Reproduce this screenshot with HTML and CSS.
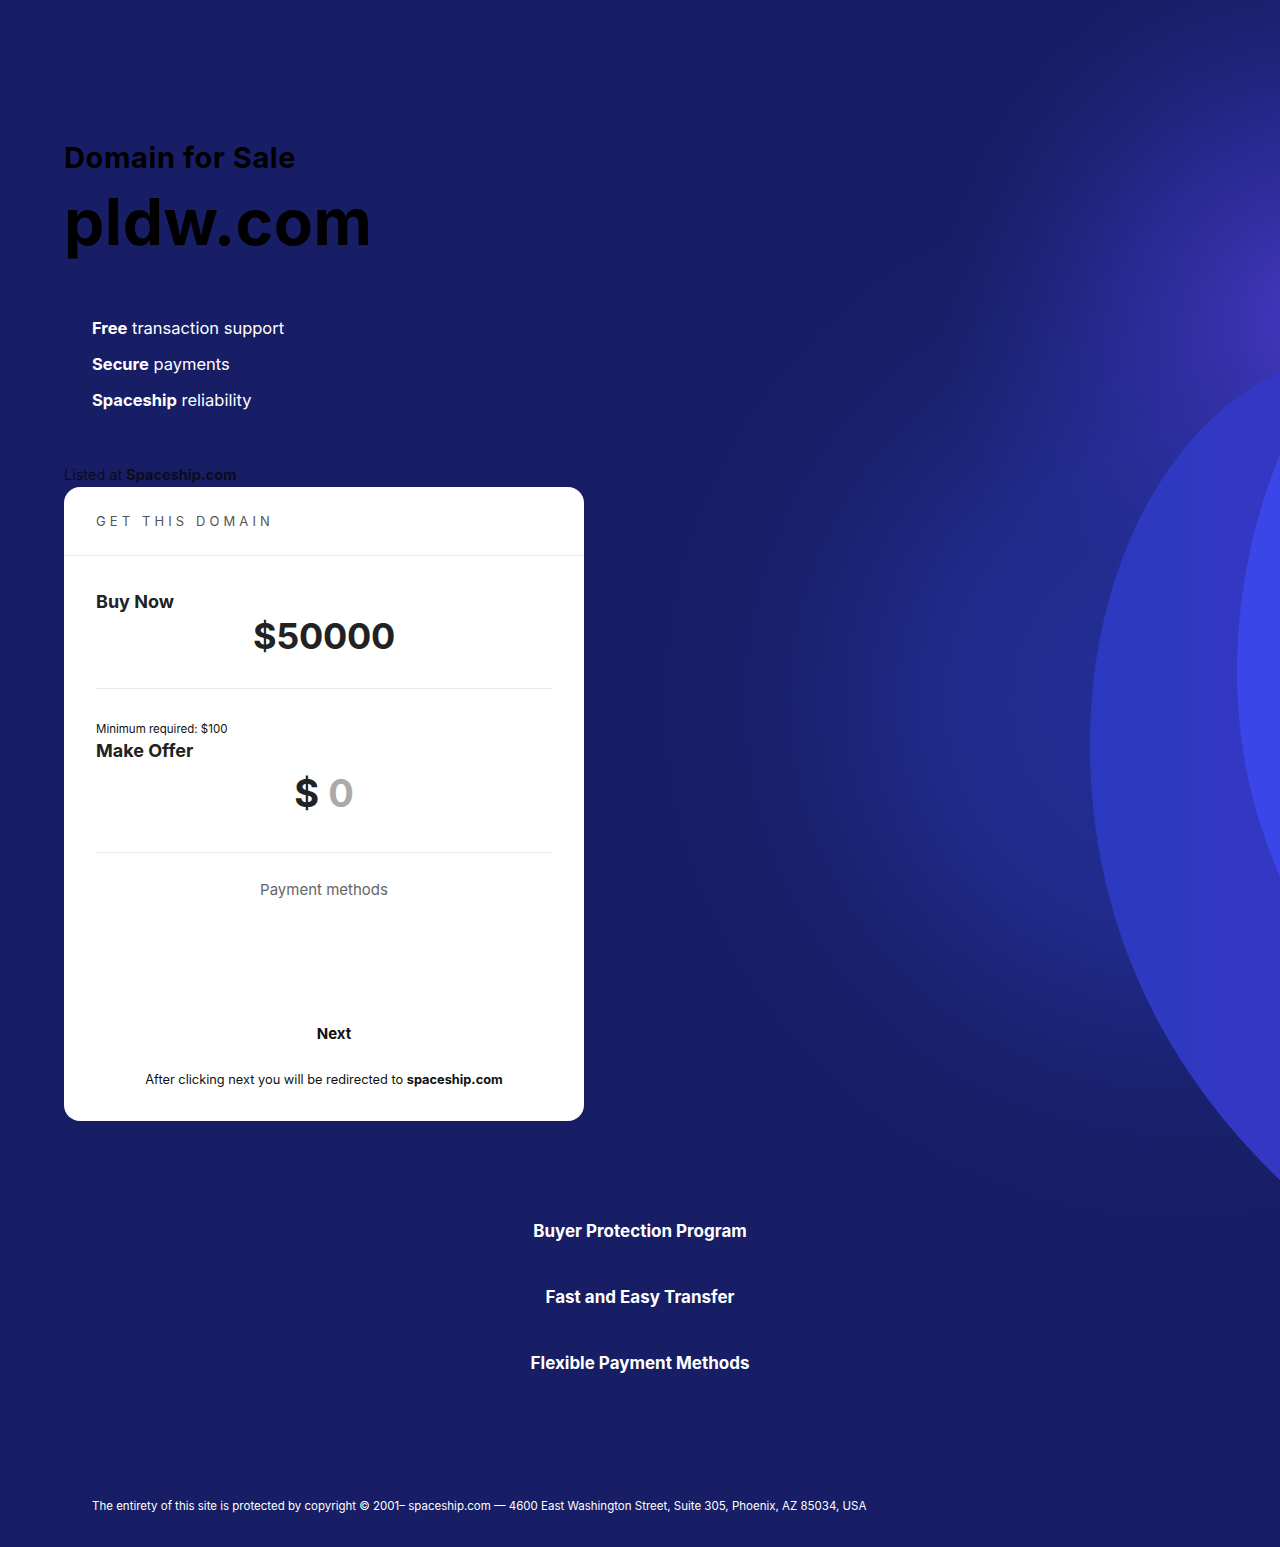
FILE: index.html
```html
<!DOCTYPE html>
<html lang="en">
<head>
<meta charset="utf-8">
<title>pldw.com - Domain for Sale</title>
<link rel="stylesheet" href="styles.css">
</head>
<body>
<div class="page">
  <svg class="bg" width="1280" height="1547" viewBox="0 0 1280 1547" aria-hidden="true">
    <defs>
      <radialGradient id="glow" cx="1180" cy="700" r="560" gradientUnits="userSpaceOnUse">
        <stop offset="0" stop-color="#25309a"/>
        <stop offset="0.45" stop-color="#1f2a88"/>
        <stop offset="1" stop-color="#171e65" stop-opacity="0"/>
      </radialGradient>
      <radialGradient id="purple" cx="1320" cy="320" r="380" gradientUnits="userSpaceOnUse">
        <stop offset="0" stop-color="#4838c4"/>
        <stop offset="0.5" stop-color="#3331ac" stop-opacity="0.6"/>
        <stop offset="1" stop-color="#232b90" stop-opacity="0"/>
      </radialGradient>
      <linearGradient id="mid" x1="0" y1="0" x2="1" y2="0">
        <stop offset="0" stop-color="#2b39c0"/>
        <stop offset="1" stop-color="#3537c4"/>
      </linearGradient>
    </defs>
    <rect x="0" y="0" width="1280" height="1547" fill="url(#glow)"/>
    <rect x="0" y="0" width="1280" height="1547" fill="url(#purple)"/>
    <path d="M1280,372 C1175,420 1090,560 1090,745 C1090,930 1170,1075 1280,1180 Z" fill="url(#mid)"/>
    <path d="M1280,455 C1252,520 1237,600 1237,670 C1237,760 1258,825 1280,877 Z" fill="#3a46e8"/>
  </svg>

  <main class="content">
    <section class="intro">
      <h2 class="subtitle">Domain for Sale</h2>
      <h1 class="domain">pldw.com</h1>
      <ul class="perks">
        <li><b>Free</b> transaction support</li>
        <li><b>Secure</b> payments</li>
        <li><b>Spaceship</b> reliability</li>
      </ul>
      <p class="listed">Listed at <b>Spaceship.com</b></p>
    </section>

    <div class="card">
      <div class="card-head">GET THIS DOMAIN</div>
      <div class="card-body">
        <div class="option buy">
          <div class="opt-title">Buy Now</div>
          <div class="price">$50000</div>
        </div>
        <div class="option offer">
          <div class="min">Minimum required: $100</div>
          <div class="opt-title">Make Offer</div>
          <div class="offer-input"><span class="cur">$</span><span class="ph">0</span></div>
        </div>
        <div class="payment">Payment methods</div>
        <div class="next">Next</div>
        <p class="redirect">After clicking next you will be redirected to <b>spaceship.com</b></p>
      </div>
    </div>

    <ul class="features">
      <li>Buyer Protection Program</li>
      <li>Fast and Easy Transfer</li>
      <li>Flexible Payment Methods</li>
    </ul>

    <footer class="footer">The entirety of this site is protected by copyright © 2001– spaceship.com — 4600 East Washington Street, Suite 305, Phoenix, AZ 85034, USA</footer>
  </main>
</div>
</body>
</html>
```

FILE: styles.css
```css
* { box-sizing: border-box; }
html, body { margin: 0; padding: 0; }
body {
  background: #171e65;
  font-family: Inter, "Noto Sans", Arial, sans-serif;
  color: #fff;
}
.page {
  position: relative;
  width: 1280px;
  min-height: 1547px;
  overflow: hidden;
}
.bg {
  position: absolute;
  left: 0;
  top: 0;
  z-index: 0;
}
.content {
  position: relative;
  z-index: 1;
  padding: 138px 64px 0 64px;
}
.subtitle {
  margin: 0;
  font-size: 29px;
  line-height: 40px;
  font-weight: 700;
  color: #000;
  letter-spacing: 0.6px;
}
.domain {
  margin: 6px 0 0 0;
  font-size: 64px;
  line-height: 76px;
  font-weight: 700;
  color: #000;
  letter-spacing: 0.5px;
}
.perks {
  list-style: none;
  margin: 50px 0 0 0;
  padding: 0 0 0 28px;
}
.perks li {
  font-size: 16.5px;
  line-height: 36px;
  color: #fff;
}
.perks b { font-weight: 700; }
.listed {
  margin: 48px 0 0 0;
  font-size: 14.5px;
  line-height: 18px;
  color: #0b0b1a;
}
.listed b { font-weight: 700; }

.card {
  width: 520px;
  margin-top: 3px;
  background: #fff;
  border-radius: 16px;
  color: #222;
}
.card-head {
  height: 69px;
  padding: 0 32px;
  display: flex;
  align-items: center;
  font-size: 13px;
  letter-spacing: 4.1px;
  color: #555;
  border-bottom: 1px solid #e8e8e8;
}
.card-body {
  padding: 35px 32px 33px 32px;
}
.option {
  border-bottom: 1px solid #e8e8e8;
}
.buy {
  padding-bottom: 29px;
}
.opt-title {
  font-size: 18px;
  line-height: 22px;
  font-weight: 700;
  color: #222;
}
.price {
  text-align: center;
  margin-top: 0;
  font-size: 36px;
  line-height: 46px;
  font-weight: 700;
  color: #222;
  letter-spacing: -0.3px;
}
.offer {
  padding-top: 33px;
  padding-bottom: 34px;
}
.min {
  font-size: 11.5px;
  line-height: 14px;
  color: #111;
}
.offer .opt-title { margin-top: 4px; }
.offer-input {
  display: flex;
  justify-content: center;
  gap: 9px;
  margin-top: 6px;
  font-size: 38px;
  line-height: 50px;
  font-weight: 700;
}
.cur { color: #222; }
.ph { color: #aaa; }
.payment {
  margin-top: 27px;
  text-align: center;
  font-size: 15px;
  line-height: 20px;
  color: #666;
}
.next {
  margin-top: 124px;
  text-align: center;
  padding-left: 20px;
  font-size: 15px;
  line-height: 20px;
  font-weight: 700;
  color: #111;
}
.redirect {
  margin: 28px 0 0 0;
  text-align: center;
  font-size: 12.8px;
  line-height: 16px;
  color: #111;
}
.redirect b { font-weight: 700; }

.features {
  list-style: none;
  margin: 98px 0 0 -64px;
  padding: 0;
  width: 1280px;
  text-align: center;
}
.features li {
  font-size: 17px;
  line-height: 24px;
  font-weight: 700;
  color: #fff;
  margin-bottom: 42px;
}
.footer {
  margin-top: 124px;
  padding-left: 28px;
  font-size: 11.5px;
  line-height: 14px;
  color: #fff;
}
```
